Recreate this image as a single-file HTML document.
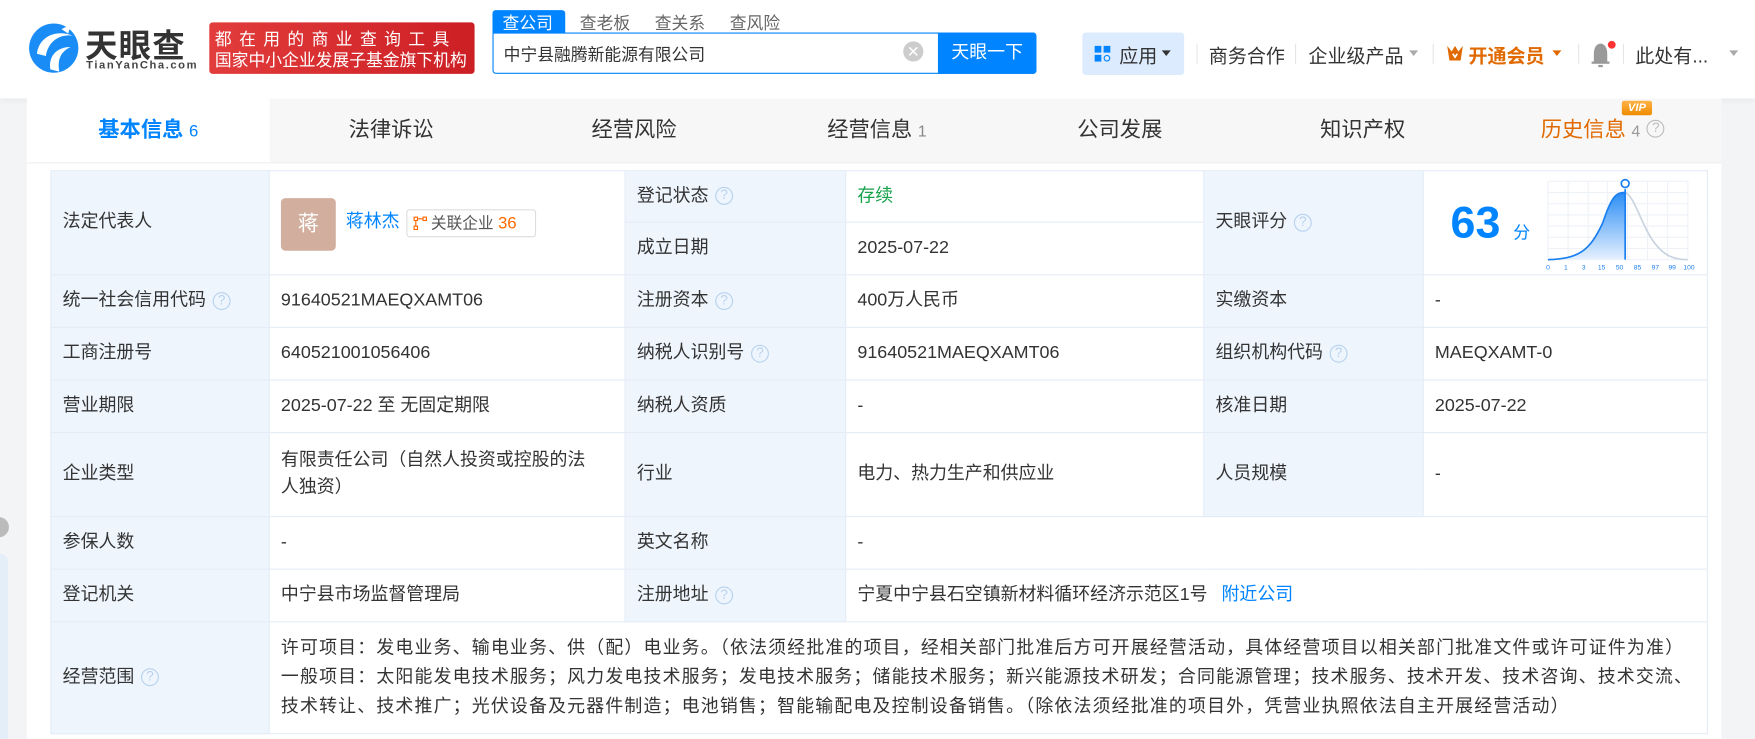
<!DOCTYPE html>
<html><head><meta charset="utf-8">
<style>
*{margin:0;padding:0;box-sizing:border-box}
html,body{width:1755px;height:738px;overflow:hidden;background:#f3f4f6}
body{font-family:"Liberation Sans","Noto Sans CJK SC",sans-serif;color:#333}
#w{position:absolute;left:0;top:0;width:1568px;height:660px;transform:scale(1.11926);transform-origin:0 0;background:#f3f4f6}
.a{position:absolute}
.hdr{left:0;top:0;width:1568px;height:88px;background:#fff;box-shadow:0 2px 6px rgba(0,0,0,.06)}
.t{position:absolute;white-space:nowrap}
.q{display:inline-block;width:16px;height:16px;border:1.5px solid #b8d2ee;border-radius:50%;color:#b8d2ee;font-size:12px;line-height:13px;text-align:center;vertical-align:middle;margin-left:6px;font-family:"Liberation Sans",sans-serif;letter-spacing:0}
table{position:absolute;left:45px;top:152px;border-collapse:collapse;font-size:16px;color:#333}
td{border:1px solid #e4ecf6;padding:0 0 0 10px;vertical-align:middle;line-height:24px}
td.l{background:#eef5fd}
.tab{position:absolute;top:88px;height:57px;line-height:57px;text-align:center;font-size:19px;color:#333}
.dd{position:absolute;width:0;height:0;border-left:4px solid transparent;border-right:4px solid transparent;border-top:5px solid #aaa}
</style></head><body><div id="w">
<div class="a hdr"></div>
<svg class="a" style="left:25px;top:18px" width="46" height="48" viewBox="0 0 46 48">
<circle cx="23" cy="25" r="22" fill="#1a8cf5"/>
<path d="M8 30 C10 14 26 8 40 14 C30 12 18 18 16 32 Z" fill="#fff"/>
<path d="M20 44 C18 32 26 24 38 24 C30 28 26 34 28 46 Z" fill="#fff"/>
<path d="M30 8 L38 4 L36 12 Z" fill="#fff"/>
</svg>
<div class="t" style="left:76px;top:18px;font-size:29px;font-weight:bold;color:#333;letter-spacing:1px">天眼查</div>
<div class="t" style="left:77px;top:53px;font-size:10px;font-weight:bold;color:#444;letter-spacing:1.4px">TianYanCha.com</div>
<div class="a" style="left:187px;top:20px;width:237px;height:46px;background:linear-gradient(90deg,#e23c3c,#cc1f24);border-radius:3px"></div>
<div class="t" style="left:192px;top:24px;font-size:15px;color:#fff;letter-spacing:6.6px">都在用的商业查询工具</div>
<div class="t" style="left:192px;top:43px;font-size:15px;color:#fff">国家中小企业发展子基金旗下机构</div>
<div class="a" style="left:440px;top:9px;width:65px;height:21px;background:#0084ff;border-radius:3px 3px 0 0"></div>
<div class="t" style="left:449px;top:10px;font-size:15px;color:#fff">查公司</div>
<div class="t" style="left:518px;top:10px;font-size:15px;color:#666">查老板</div>
<div class="t" style="left:585px;top:10px;font-size:15px;color:#666">查关系</div>
<div class="t" style="left:652px;top:10px;font-size:15px;color:#666">查风险</div>
<div class="a" style="left:440px;top:29px;width:486px;height:37px;border:1px solid #0084ff;border-radius:0 3px 3px 3px;background:#fff"></div>
<div class="t" style="left:450px;top:38px;font-size:15px;color:#333">中宁县融腾新能源有限公司</div>
<div class="a" style="left:807px;top:37px;width:18px;height:18px;border-radius:50%;background:#ccc;color:#fff;font-size:14px;line-height:18px;text-align:center">✕</div>
<div class="a" style="left:838px;top:29px;width:88px;height:37px;background:#0084ff;border-radius:0 3px 3px 0;color:#fff;font-size:16px;line-height:37px;text-align:center">天眼一下</div>
<div class="a" style="left:967px;top:29px;width:91px;height:38px;background:#dcebfd;border-radius:3px"></div>
<div class="a" style="left:978px;top:41px;width:6px;height:6px;background:#0084ff"></div><div class="a" style="left:986px;top:41px;width:6px;height:6px;background:#0084ff"></div>
<div class="a" style="left:978px;top:49px;width:6px;height:6px;background:#0084ff"></div><div class="a" style="left:986px;top:49px;width:6px;height:6px;border:1.5px solid #0084ff;border-radius:50%"></div>
<div class="t" style="left:1000px;top:36px;font-size:17px;color:#333">应用</div>
<div class="dd" style="left:1038px;top:45px;border-top-color:#333"></div>
<div class="a" style="left:1069px;top:39px;width:1px;height:18px;background:#e5e5e5"></div>
<div class="t" style="left:1080px;top:36px;font-size:17px;color:#333">商务合作</div>
<div class="a" style="left:1157px;top:39px;width:1px;height:18px;background:#e5e5e5"></div>
<div class="t" style="left:1169px;top:36px;font-size:17px;color:#333">企业级产品</div>
<div class="dd" style="left:1259px;top:45px"></div>
<div class="a" style="left:1280px;top:39px;width:1px;height:18px;background:#e5e5e5"></div>
<svg class="a" style="left:1292px;top:40px" width="16" height="15" viewBox="0 0 16 15"><path d="M1 1 L5 6 L8 1 L11 6 L15 1 L13 14 L3 14 Z" fill="#e06a00"/><path d="M6 8 L8 11 L10 8" stroke="#fff" stroke-width="1.5" fill="none"/></svg>
<div class="t" style="left:1312px;top:36px;font-size:17px;color:#e06a00;font-weight:bold">开通会员</div>
<div class="dd" style="left:1387px;top:45px;border-top-color:#e06a00"></div>
<div class="a" style="left:1410px;top:39px;width:1px;height:18px;background:#e5e5e5"></div>
<svg class="a" style="left:1420px;top:36px" width="24" height="26" viewBox="0 0 24 26"><path d="M4 20 L4 12 C4 6 7 3 10 3 C13 3 16 6 16 12 L16 20 Z" fill="#999"/><rect x="2" y="19" width="16" height="2" fill="#999"/><rect x="8" y="22" width="4" height="2" fill="#999"/><circle cx="20" cy="4" r="3.5" fill="#f33"/></svg>
<div class="a" style="left:1450px;top:39px;width:1px;height:18px;background:#e5e5e5"></div>
<div class="t" style="left:1461px;top:36px;font-size:17px;color:#333">此处有...</div>
<div class="dd" style="left:1545px;top:45px"></div>
<div class="a" style="left:-10px;top:462px;width:18px;height:18px;border-radius:50%;background:#bbb"></div>
<div class="a" style="left:-4px;top:495px;width:11px;height:165px;background:#e3eef9;border-radius:0 6px 0 0"></div>
<div class="a" style="left:24px;top:88px;width:1514px;height:572px;background:#fff"></div>
<div class="a" style="left:241px;top:88px;width:1297px;height:57px;background:#f7f7f7"></div>
<div class="a" style="left:24px;top:145px;width:1514px;height:1px;background:#eee"></div>
<div class="tab" style="left:24px;width:217px;color:#0084ff;font-weight:bold">基本信息<span style="font-weight:normal;font-size:15px;margin-left:5px">6</span></div>
<div class="tab" style="left:241px;width:217px">法律诉讼</div>
<div class="tab" style="left:458px;width:217px">经营风险</div>
<div class="tab" style="left:675px;width:217px">经营信息<span style="font-size:14px;color:#888;margin-left:5px">1</span></div>
<div class="tab" style="left:892px;width:217px">公司发展</div>
<div class="tab" style="left:1109px;width:217px">知识产权</div>
<div class="tab" style="left:1326px;width:212px;color:#e06a00">历史信息<span style="font-size:14px;color:#999;margin-left:5px">4</span><span class="q" style="border-color:#bbb;color:#bbb;margin-top:-3px">?</span></div>
<div class="a" style="left:1449px;top:90px;width:27px;height:13px;background:linear-gradient(#ffb347,#f08a00);border-radius:2px;color:#fff;font-size:10px;font-weight:bold;font-style:italic;line-height:13px;text-align:center">VIP</div>
<table>
<colgroup><col style="width:195px"><col style="width:318px"><col style="width:197px"><col style="width:320px"><col style="width:196px"><col style="width:254px"></colgroup>
<tr style="height:46px"><td class="l" rowspan="2">法定代表人</td><td rowspan="2" style="position:relative">
<div class="a" style="left:10px;top:24px;width:49px;height:47px;background:#d2ae9e;border-radius:4px;color:#fff;font-size:19px;line-height:47px;text-align:center">蒋</div>
<span class="a" style="left:68px;top:34px;color:#0084ff">蒋林杰</span>
<div class="a" style="left:122px;top:34px;width:116px;height:25px;border:1px solid #ddd;border-radius:3px;font-size:14px;line-height:23px;padding-left:21px;color:#555">关联企业 <span style="color:#ff6a00;font-size:15px">36</span>
<svg class="a" style="left:5px;top:5px" width="13" height="13" viewBox="0 0 13 13"><rect x="1" y="1" width="3" height="3" fill="none" stroke="#f60"/><rect x="9" y="1" width="3" height="3" fill="none" stroke="#f60"/><rect x="1" y="9" width="3" height="3" fill="none" stroke="#f60"/><path d="M4 2.5 H9 M2.5 4 V9" stroke="#f60"/></svg></div>
</td>
<td class="l">登记状态<span class="q">?</span></td><td style="color:#16a34a">存续</td><td class="l" rowspan="2">天眼评分<span class="q">?</span></td><td rowspan="2" style="position:relative;padding:0">
<span class="a" style="left:24px;top:22px;font-size:40px;font-weight:bold;color:#0084ff;line-height:48px">63</span><span class="a" style="left:80px;top:44px;font-size:15px;color:#0084ff">分</span>
<svg class="a" style="left:108px;top:6px" width="140" height="84" viewBox="0 0 140 84">
<defs><linearGradient id="g" x1="0" y1="0" x2="0" y2="1"><stop offset="0" stop-color="#2b8df5"/><stop offset="1" stop-color="#e6f1fe"/></linearGradient></defs>
<g stroke="#eef2f7" stroke-width="1"><path d="M3 3H128M3 13H128M3 23H128M3 33H128M3 43H128M3 53H128M3 63H128M3 73H128"/><path d="M3 3V73M21 3V73M39 3V73M56 3V73M74 3V73M92 3V73M110 3V73M128 3V73"/></g>
<path d="M3 73 C30 72 40 66 52 40 C60 16 64 13 72 13 L72 73 Z" fill="url(#g)"/>
<path d="M3 73 C30 72 40 66 52 40 C60 16 64 13 72 13" stroke="#1a7ff0" stroke-width="1.5" fill="none"/>
<path d="M72 13 C80 16 86 40 96 55 C106 70 116 73 128 73" stroke="#c9d4e0" stroke-width="1.5" fill="none"/>
<path d="M72 10 V73" stroke="#1a7ff0" stroke-width="1.5"/>
<circle cx="72" cy="5" r="3.5" fill="#fff" stroke="#1a7ff0" stroke-width="1.5"/>
<g font-size="6" fill="#1a7ff0" font-family="Liberation Sans" text-anchor="middle"><text x="3" y="82">0</text><text x="19" y="82">1</text><text x="35" y="82">3</text><text x="51" y="82">15</text><text x="67" y="82">50</text><text x="83" y="82">85</text><text x="99" y="82">97</text><text x="114" y="82">99</text><text x="129" y="82">100</text></g>
</svg></td></tr>
<tr style="height:47px"><td class="l">成立日期</td><td>2025-07-22</td></tr>
<tr style="height:47px"><td class="l">统一社会信用代码<span class="q">?</span></td><td>91640521MAEQXAMT06</td><td class="l">注册资本<span class="q">?</span></td><td>400万人民币</td><td class="l">实缴资本</td><td>-</td></tr>
<tr style="height:47px"><td class="l">工商注册号</td><td>640521001056406</td><td class="l">纳税人识别号<span class="q">?</span></td><td>91640521MAEQXAMT06</td><td class="l">组织机构代码<span class="q">?</span></td><td>MAEQXAMT-0</td></tr>
<tr style="height:47px"><td class="l">营业期限</td><td>2025-07-22 至 无固定期限</td><td class="l">纳税人资质</td><td>-</td><td class="l">核准日期</td><td>2025-07-22</td></tr>
<tr style="height:75px"><td class="l">企业类型</td><td style="padding-right:0;white-space:nowrap">有限责任公司（自然人投资或控股的法<br>人独资）</td><td class="l">行业</td><td>电力、热力生产和供应业</td><td class="l">人员规模</td><td>-</td></tr>
<tr style="height:47px"><td class="l">参保人数</td><td>-</td><td class="l">英文名称</td><td colspan="3">-</td></tr>
<tr style="height:47px"><td class="l">登记机关</td><td>中宁县市场监督管理局</td><td class="l">注册地址<span class="q">?</span></td><td colspan="3">宁夏中宁县石空镇新材料循环经济示范区1号 <span style="color:#0084ff;margin-left:8px">附近公司</span></td></tr>
<tr style="height:100px"><td class="l">经营范围<span class="q">?</span></td><td colspan="5" style="line-height:26px;padding-right:0;white-space:nowrap;letter-spacing:1.05px">许可项目：发电业务、输电业务、供（配）电业务。（依法须经批准的项目，经相关部门批准后方可开展经营活动，具体经营项目以相关部门批准文件或许可证件为准）<br>一般项目：太阳能发电技术服务；风力发电技术服务；发电技术服务；储能技术服务；新兴能源技术研发；合同能源管理；技术服务、技术开发、技术咨询、技术交流、<br>技术转让、技术推广；光伏设备及元器件制造；电池销售；智能输配电及控制设备销售。（除依法须经批准的项目外，凭营业执照依法自主开展经营活动）</td></tr>
</table>
</div></body></html>
